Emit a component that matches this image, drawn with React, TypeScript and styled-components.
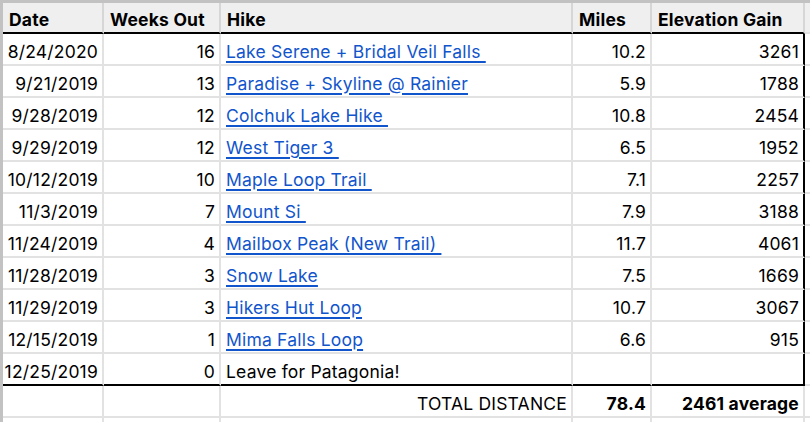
import React from "react";
import styled, { createGlobalStyle, css } from "styled-components";

const GlobalStyle = createGlobalStyle`
  html, body {
    margin: 0;
    padding: 0;
    background: #ffffff;
    overflow: hidden;
  }
  body {
    font-family: "Inter", "Lato", "Liberation Sans", sans-serif;
    color: #000;
  }
`;

const GRID = "#e2e2e2";
const HEADER_GRID = "#d6d6d6";
const STRIP = "#c2c2c2";

const Sheet = styled.div`
  width: 810px;
  height: 422px;
  box-sizing: border-box;
  border-top: 3px solid ${STRIP};
  border-left: 3px solid ${STRIP};
  display: flex;
  flex-direction: column;
  overflow: hidden;
`;

const Row = styled.div<{ $h: number }>`
  display: grid;
  grid-template-columns: 101px 117px 352px 79px 153px 1fr;
  height: ${(p) => p.$h}px;
  flex: none;
`;

type CellProps = {
  $align?: "left" | "right";
  $bold?: boolean;
  $header?: boolean;
  $blackBottom?: boolean;
  $blackRight?: boolean;
  $noRight?: boolean;
};

const Cell = styled.div<CellProps>`
  box-sizing: border-box;
  display: flex;
  align-items: center;
  justify-content: ${(p) => (p.$align === "right" ? "flex-end" : "flex-start")};
  padding: 4px 4px 0 5px;
  font-size: 17.5px;
  letter-spacing: 0.2px;
  font-weight: ${(p) => (p.$bold ? 700 : 400)};
  white-space: pre;
  overflow: hidden;
  background: ${(p) => (p.$header ? "#efefef" : "#ffffff")};
  border-bottom: 2px solid ${(p) => (p.$blackBottom ? "#000" : GRID)};
  border-right: 2px solid
    ${(p) => (p.$blackRight ? "#000" : p.$header ? HEADER_GRID : GRID)};
  ${(p) =>
    p.$noRight &&
    css`
      border-right: none;
    `}
  ${(p) =>
    p.$header &&
    css`
      padding-left: 6px;
    `}
`;

const Link = styled.a`
  color: #1155cc;
  text-decoration: underline;
  text-decoration-thickness: 2px;
  text-underline-offset: 3px;
  white-space: pre;
  cursor: pointer;
`;

type Hike = {
  date: string;
  weeks: number;
  name: string;
  link: boolean;
  miles: string;
  gain: string;
};

const hikes: Hike[] = [
  { date: "8/24/2020", weeks: 16, name: "Lake Serene + Bridal Veil Falls ", link: true, miles: "10.2", gain: "3261" },
  { date: "9/21/2019", weeks: 13, name: "Paradise + Skyline @ Rainier", link: true, miles: "5.9", gain: "1788" },
  { date: "9/28/2019", weeks: 12, name: "Colchuk Lake Hike ", link: true, miles: "10.8", gain: "2454" },
  { date: "9/29/2019", weeks: 12, name: "West Tiger 3 ", link: true, miles: "6.5", gain: "1952" },
  { date: "10/12/2019", weeks: 10, name: "Maple Loop Trail ", link: true, miles: "7.1", gain: "2257" },
  { date: "11/3/2019", weeks: 7, name: "Mount Si ", link: true, miles: "7.9", gain: "3188" },
  { date: "11/24/2019", weeks: 4, name: "Mailbox Peak (New Trail) ", link: true, miles: "11.7", gain: "4061" },
  { date: "11/28/2019", weeks: 3, name: "Snow Lake", link: true, miles: "7.5", gain: "1669" },
  { date: "11/29/2019", weeks: 3, name: "Hikers Hut Loop", link: true, miles: "10.7", gain: "3067" },
  { date: "12/15/2019", weeks: 1, name: "Mima Falls Loop", link: true, miles: "6.6", gain: "915" },
  { date: "12/25/2019", weeks: 0, name: "Leave for Patagonia!", link: false, miles: "", gain: "" },
];

export default function App() {
  return (
    <>
      <GlobalStyle />
      <Sheet>
        <Row $h={31}>
          <Cell $header $bold $blackBottom>Date</Cell>
          <Cell $header $bold $blackBottom>Weeks Out</Cell>
          <Cell $header $bold $blackBottom>Hike</Cell>
          <Cell $header $bold $blackBottom>Miles</Cell>
          <Cell $header $bold $blackBottom>Elevation Gain</Cell>
          <Cell $header $noRight />
        </Row>
        {hikes.map((h, i) => {
          const last = i === hikes.length - 1;
          return (
            <Row $h={32} key={h.date + h.name}>
              <Cell $align="right" $blackBottom={last}>{h.date}</Cell>
              <Cell $align="right" $blackBottom={last}>{String(h.weeks)}</Cell>
              <Cell $blackBottom={last}>
                {h.link ? <Link>{h.name}</Link> : h.name}
              </Cell>
              <Cell $align="right" $blackBottom={last}>{h.miles}</Cell>
              <Cell $align="right" $blackBottom={last} $blackRight>{h.gain}</Cell>
              <Cell $noRight />
            </Row>
          );
        })}
        <Row $h={32}>
          <Cell />
          <Cell />
          <Cell $align="right">TOTAL DISTANCE</Cell>
          <Cell $align="right" $bold>78.4</Cell>
          <Cell $align="right" $bold>2461 average</Cell>
          <Cell $noRight />
        </Row>
        <Row $h={32}>
          <Cell />
          <Cell />
          <Cell />
          <Cell />
          <Cell />
          <Cell $noRight />
        </Row>
      </Sheet>
    </>
  );
}
